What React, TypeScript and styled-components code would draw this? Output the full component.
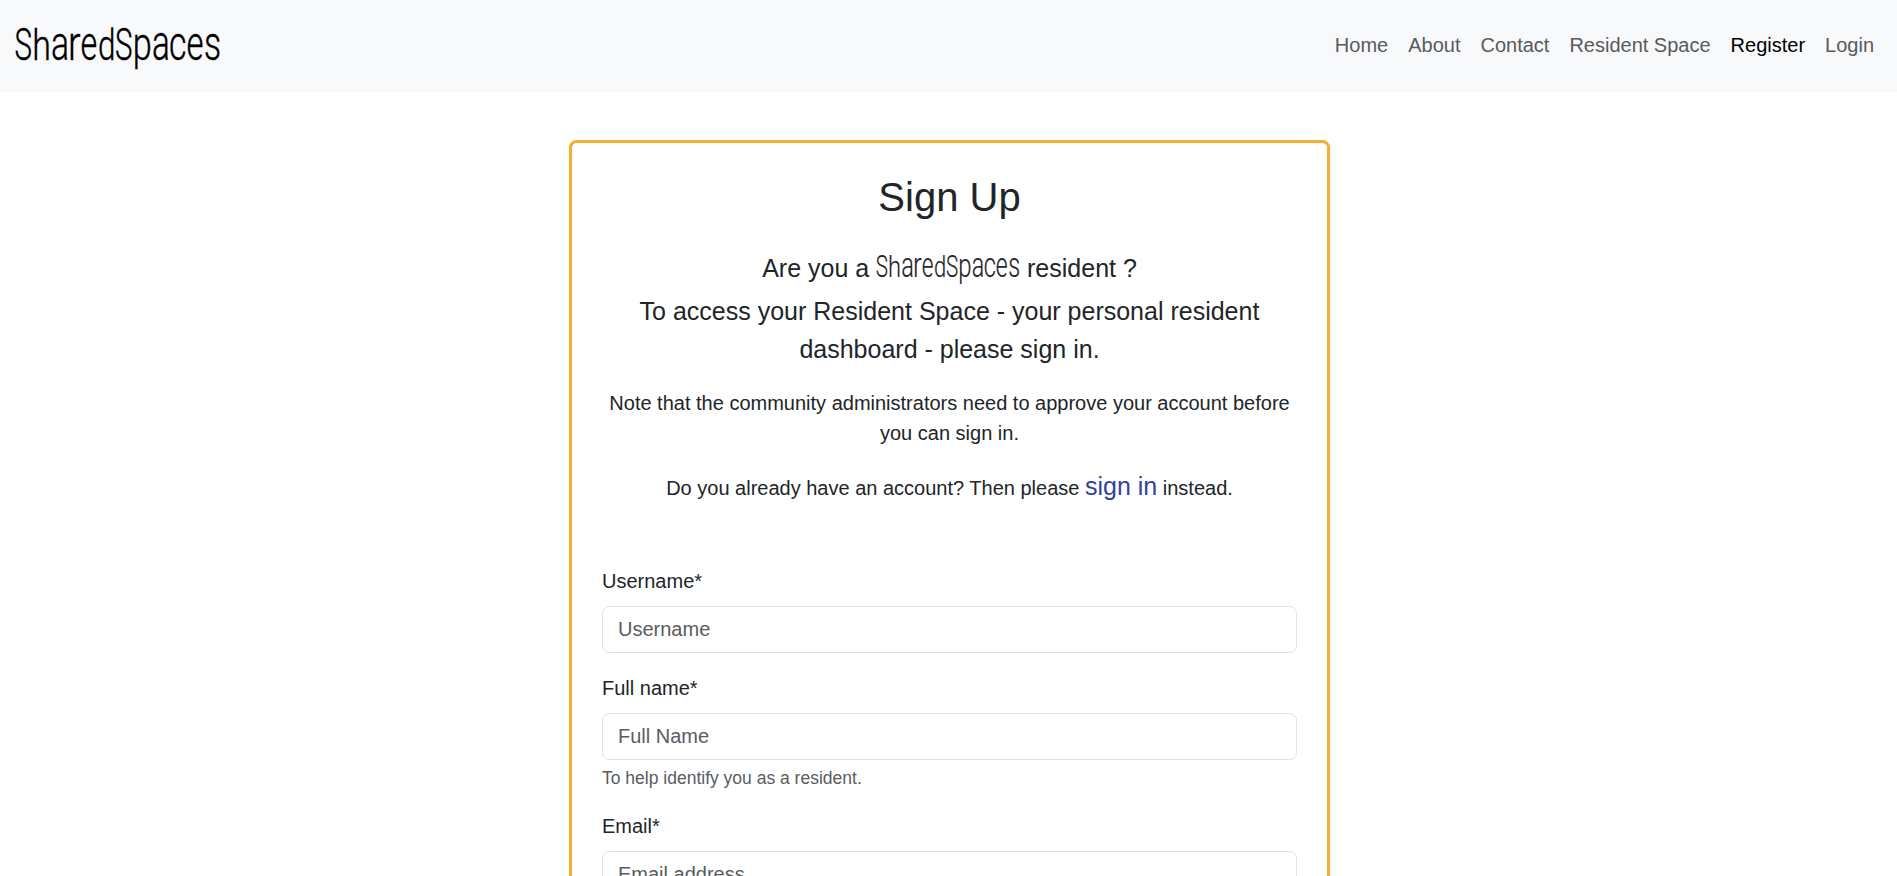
import React from "react";
import styled, { createGlobalStyle } from "styled-components";

const GlobalStyle = createGlobalStyle`
  *, *::before, *::after { box-sizing: border-box; }
  html, body { height: 100%; }
  body {
    margin: 0;
    overflow: hidden;
    background: #fff;
    color: #212529;
    font: 400 20px/1.5 "Liberation Sans", Arial, sans-serif;
  }
  #root { height: 100%; overflow: hidden; }
`;

const Navbar = styled.header`
  display: flex;
  align-items: flex-start;
  justify-content: space-between;
  height: 92px;
  padding: 20px 13px 0 15px;
  background: #f8f9fb;
`;

const NavLinks = styled.nav`
  display: flex;
  padding-top: 10px;
`;

const NavLink = styled.a<{ $active?: boolean }>`
  padding: 0 10px;
  color: ${(p) => (p.$active ? "#000" : "#595a5b")};
  text-decoration: none;
`;

const WordmarkSvg = styled.svg<{ $inline?: boolean }>`
  display: ${(p) => (p.$inline ? "inline-block" : "block")};
  width: ${(p) => (p.$inline ? "144px" : "206px")};
  height: ${(p) => (p.$inline ? "33.6px" : "48px")};
  margin: ${(p) => (p.$inline ? "-6px 0 -6px" : "0")};
  vertical-align: baseline;
  fill: ${(p) => (p.$inline ? "#212529" : "#000")};
  stroke: ${(p) => (p.$inline ? "#212529" : "#000")};
  stroke-width: ${(p) => (p.$inline ? "0.25px" : "0.4px")};
  font-family: Roboto, sans-serif;
  font-weight: 300;
  overflow: visible;
`;

const Page = styled.main`
  display: flex;
  justify-content: center;
  padding: 48px 0 0 2px;
`;

const Card = styled.section`
  width: 761px;
  padding: 30px;
  border: 3px solid #f6ae2d;
  border-radius: 7.5px;
`;

const Intro = styled.div`
  text-align: center;
  margin-bottom: 60px;
`;

const Title = styled.h1`
  margin: 0 0 29px;
  font-size: 40px;
  font-weight: 400;
  line-height: 48px;
`;

const Lead = styled.p<{ $gap: number }>`
  margin: 0 0 ${(p) => p.$gap}px;
  font-size: 25px;
  line-height: 37.5px;
`;

const Note = styled.p`
  margin: 0 0 20px;
`;

const SignInLink = styled.a`
  color: #33429a;
  font-size: 25px;
  text-decoration: none;
`;

const Field = styled.div`
  margin-bottom: 20px;
`;

const Label = styled.label`
  display: block;
  margin-bottom: 10px;
`;

const Input = styled.input`
  display: block;
  width: 100%;
  height: 47px;
  padding: 7.5px 15px;
  border: 1px solid #dee2e6;
  border-radius: 7.5px;
  background: #fff;
  color: #212529;
  font: inherit;
  &::placeholder { color: #595c5f; opacity: 1; }
`;

const Help = styled.div`
  margin-top: 5px;
  color: #595c5f;
  font-size: 17.5px;
  line-height: 26.25px;
`;

// Each letter of the wordmark: character, left edge, font size, horizontal squeeze.
const letters: [string, number, number, number][] = [
  ["S", 0, 44, 0.67], ["h", 17.7, 43, 0.79], ["a", 36.5, 49, 0.69], ["r", 53.5, 49, 0.76],
  ["e", 66, 49, 0.66], ["d", 83.5, 43, 0.73], ["S", 100.5, 44, 0.67], ["p", 118.2, 47, 0.73],
  ["a", 137.5, 49, 0.68], ["c", 154.5, 49, 0.69], ["e", 171.8, 49, 0.67], ["s", 189.5, 49, 0.69],
];

function Wordmark({ inline }: { inline?: boolean }) {
  return (
    <WordmarkSvg $inline={inline} viewBox="0 0 206 48">
      {letters.map(([char, x, size, squeeze], i) => (
        <text key={i} transform={`translate(${x - 0.4} 39.7) scale(${squeeze} 1)`} fontSize={size}>
          {char}
        </text>
      ))}
    </WordmarkSvg>
  );
}

const links = ["Home", "About", "Contact", "Resident Space", "Register", "Login"];

const fields = [
  { id: "username", label: "Username*", placeholder: "Username" },
  { id: "fullname", label: "Full name*", placeholder: "Full Name", help: "To help identify you as a resident." },
  { id: "email", label: "Email*", placeholder: "Email address" },
];

export default function App() {
  return (
    <>
      <GlobalStyle />
      <Navbar>
        <Wordmark />
        <NavLinks>
          {links.map((name) => (
            <NavLink key={name} $active={name === "Register"}>{name}</NavLink>
          ))}
        </NavLinks>
      </Navbar>
      <Page>
        <Card>
          <Intro>
            <Title>Sign Up</Title>
            <Lead $gap={5.5}>Are you a <Wordmark inline /> resident ?</Lead>
            <Lead $gap={20}>
              To access your Resident Space - your personal resident dashboard - please sign in.
            </Lead>
            <Note>
              Note that the community administrators need to approve your account before you can sign in.
            </Note>
            <Note>
              Do you already have an account? Then please <SignInLink>sign in</SignInLink> instead.
            </Note>
          </Intro>
          {fields.map((f) => (
            <Field key={f.id}>
              <Label htmlFor={f.id}>{f.label}</Label>
              <Input id={f.id} placeholder={f.placeholder} />
              {f.help && <Help>{f.help}</Help>}
            </Field>
          ))}
        </Card>
      </Page>
    </>
  );
}
